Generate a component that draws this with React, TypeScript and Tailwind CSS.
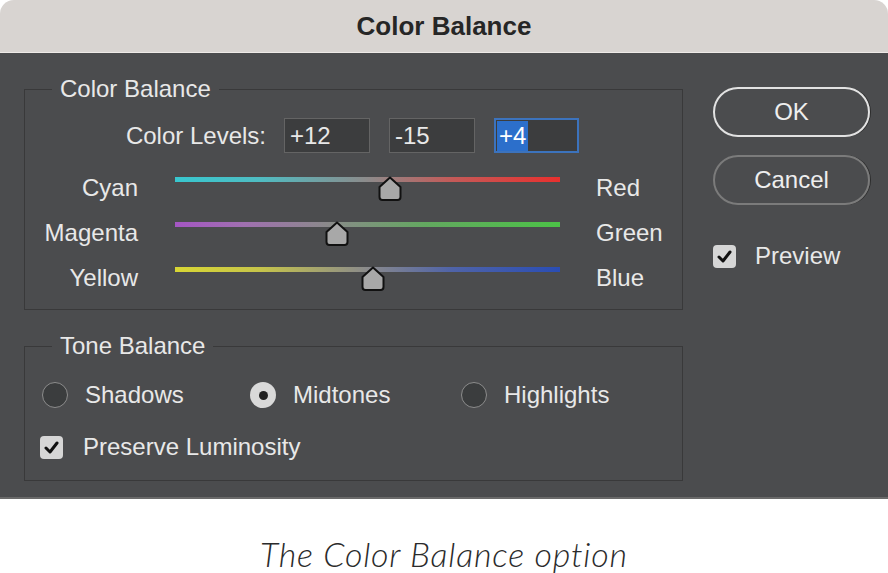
import React from "react";

const ui = "font-['Liberation_Sans',Arial,sans-serif]";

function Thumb({ left }: { left: number }) {
  return (
    <svg
      width="26"
      height="26"
      viewBox="0 0 26 26"
      className="absolute top-[11px]"
      style={{ left: left - 13 }}
    >
      <path
        d="M13 1.5 L23.5 11 L23.5 21 Q23.5 24 20.5 24 L5.5 24 Q2.5 24 2.5 21 L2.5 11 Z"
        fill="#a8a8a8"
        stroke="#111"
        strokeWidth="2"
        strokeLinejoin="round"
      />
    </svg>
  );
}

function SliderRow({
  left,
  right,
  track,
  pos,
}: {
  left: string;
  right: string;
  track: string;
  pos: number;
}) {
  return (
    <div className="flex h-[45px] items-center">
      <span className="w-[113px] text-right">{left}</span>
      <div className="relative ml-[37px] h-full w-[385px]">
        <div className={"mt-[12px] h-[5px] w-full " + track} />
        <Thumb left={pos} />
      </div>
      <span className="ml-[36px]">{right}</span>
    </div>
  );
}

function Check() {
  return (
    <span className="flex h-[23px] w-[23px] items-center justify-center rounded-[4px] bg-[#d6d6d6]">
      <svg width="15" height="13" viewBox="0 0 15 13">
        <path d="M2 7 L6 11 L13 2" fill="none" stroke="#111" strokeWidth="3" strokeLinecap="round" strokeLinejoin="round" />
      </svg>
    </span>
  );
}

function Radio({ checked }: { checked?: boolean }) {
  return checked ? (
    <span className="flex h-[26px] w-[26px] items-center justify-center rounded-full bg-[#d9d9d9]">
      <span className="h-[9px] w-[9px] rounded-full bg-[#222]" />
    </span>
  ) : (
    <span className="h-[26px] w-[26px] rounded-full border-[1.5px] border-[#8c8c8c] bg-[#3b3d3e]" />
  );
}

export default function App() {
  return (
    <div className={"h-[573px] w-[888px] bg-white " + ui}>
      <div className="overflow-hidden rounded-t-[14px]">
        {/* Title bar */}
        <div className="flex h-[53px] items-center justify-center border-b border-[#eeeae7] bg-[#d8d4d1] text-[26px] font-bold text-[#262626]">
          Color Balance
        </div>

        {/* Body */}
        <div className="flex h-[446px] border-b-2 border-[#6a6a6a] bg-[#4b4c4e] text-[24px] text-[#e8e8e8]">
          <div className="ml-[24px] w-[659px] pt-[36px]">
            {/* Color Balance group */}
            <div className="relative h-[221px] border border-[#39393a]">
              <span className="absolute -top-[15px] left-[27px] bg-[#4b4c4e] px-[8px] leading-[28px]">
                Color Balance
              </span>
              <div className="mt-[28px] flex h-[35px] items-center">
                <span className="w-[241px] text-right">Color Levels:</span>
                <div className="ml-[18px] flex h-[35px] w-[86px] items-center border border-[#646464] bg-[#3c3d3e] px-[5px]">
                  +12
                </div>
                <div className="ml-[19px] flex h-[35px] w-[86px] items-center border border-[#646464] bg-[#3c3d3e] px-[5px]">
                  -15
                </div>
                <div className="ml-[19px] flex h-[35px] w-[85px] items-center border-2 border-[#3c73bd] bg-[#3c3d3e] px-[1px]">
                  <span className="bg-[#2c6fcb] px-[2px] leading-[30px] text-white">+4</span>
                </div>
              </div>
              <div className="mt-[12px]">
                <SliderRow
                  left="Cyan"
                  right="Red"
                  pos={215}
                  track="bg-[linear-gradient(to_right,#38c7cf_0%,#4fbcc2_22%,#8d8b8b_50%,#c45a58_72%,#e8302e_100%)]"
                />
                <SliderRow
                  left="Magenta"
                  right="Green"
                  pos={162}
                  track="bg-[linear-gradient(to_right,#a556c4_0%,#a070b0_18%,#8a8a8a_40%,#63a860_65%,#4cc247_100%)]"
                />
                <SliderRow
                  left="Yellow"
                  right="Blue"
                  pos={198}
                  track="bg-[linear-gradient(to_right,#d8d634_0%,#c6c44a_22%,#8a8a8c_50%,#4f63a8_72%,#2a4db4_100%)]"
                />
              </div>
            </div>

            {/* Tone Balance group */}
            <div className="relative mt-[36px] h-[135px] border border-[#39393a]">
              <span className="absolute -top-[15px] left-[27px] bg-[#4b4c4e] px-[8px] leading-[28px]">
                Tone Balance
              </span>
              <div className="mt-[33px] flex h-[30px] items-center pl-[17px]">
                <div className="flex w-[208px] items-center gap-[17px]">
                  <Radio />
                  <span>Shadows</span>
                </div>
                <div className="flex w-[211px] items-center gap-[17px]">
                  <Radio checked />
                  <span>Midtones</span>
                </div>
                <div className="flex items-center gap-[17px]">
                  <Radio />
                  <span>Highlights</span>
                </div>
              </div>
              <div className="mt-[22px] flex h-[30px] items-center gap-[20px] pl-[15px]">
                <Check />
                <span>Preserve Luminosity</span>
              </div>
            </div>
          </div>

          {/* Buttons */}
          <div className="ml-[30px] flex w-[157px] flex-col pt-[34px]">
            <button className="h-[50px] rounded-full border-2 border-[#e2e2e2] text-[#eeeeee] shadow-[1px_0_0_#2c2c2c]">
              OK
            </button>
            <button className="mt-[18px] h-[50px] rounded-full border-2 border-[#7b7b7b] text-[#eeeeee] shadow-[1px_0_0_#2c2c2c]">
              Cancel
            </button>
            <div className="mt-[33px] flex items-center gap-[19px]">
              <Check />
              <span>Preview</span>
            </div>
          </div>
        </div>
      </div>

      {/* Caption */}
      <div className="flex h-[74px] items-center justify-center pt-[34px] font-['Lato',sans-serif] text-[34px] font-light italic tracking-[0.8px] text-[#2b2b2b]">
        The Color Balance option
      </div>
    </div>
  );
}
